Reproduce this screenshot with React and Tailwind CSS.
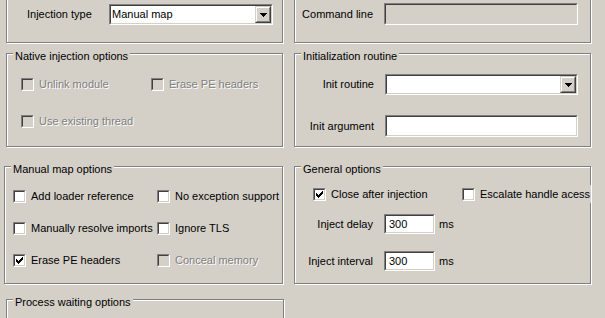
import React from "react";

function Group({ title, className = "", children }) {
  return (
    <div
      className={`relative shrink-0 border border-[#808080] shadow-[inset_1px_1px_0_#fff,1px_1px_0_#fff] ${className}`}
    >
      {title && (
        <span className="absolute left-[6px] top-[-4px] bg-[#d4d0c8] px-[2px] leading-[13px] whitespace-nowrap">
          {title}
        </span>
      )}
      {children}
    </div>
  );
}

function Check({ checked, disabled }) {
  return (
    <div className="w-[13px] h-[13px] shrink-0 border border-t-[#808080] border-l-[#808080] border-r-white border-b-white">
      <div
        className={`w-full h-full p-[1px] border border-t-[#404040] border-l-[#404040] border-r-[#d4d0c8] border-b-[#d4d0c8] ${
          disabled ? "bg-[#d4d0c8]" : "bg-white"
        }`}
      >
        {checked && (
          <svg width="7" height="7" viewBox="0 0 7 7" className="block" shapeRendering="crispEdges">
            <path
              d="M0 2h1v3H0z M1 3h1v3H1z M2 4h1v3H2z M3 3h1v3H3z M4 2h1v3H4z M5 1h1v3H5z M6 0h1v3H6z"
              fill={disabled ? "#808080" : "#000"}
            />
          </svg>
        )}
      </div>
    </div>
  );
}

function CheckItem({ label, checked, disabled, className = "" }) {
  return (
    <div className={`flex items-center ${className}`}>
      <Check checked={checked} disabled={disabled} />
      <span
        className={`ml-[5px] leading-[13px] whitespace-nowrap ${
          disabled ? "text-[#808080] [text-shadow:1px_1px_0_#fff]" : "text-black"
        }`}
      >
        {label}
      </span>
    </div>
  );
}

function Sunken({ className = "", inner = "bg-white", children }) {
  return (
    <div
      className={`shrink-0 border border-t-[#808080] border-l-[#808080] border-r-white border-b-white ${className}`}
    >
      <div
        className={`w-full h-full border border-t-[#404040] border-l-[#404040] border-r-[#d4d0c8] border-b-[#d4d0c8] ${inner}`}
      >
        {children}
      </div>
    </div>
  );
}

function DropButton() {
  return (
    <div className="w-[16px] h-full shrink-0 border border-t-[#d4d0c8] border-l-[#d4d0c8] border-r-[#404040] border-b-[#404040]">
      <div className="w-full h-full flex items-center justify-center bg-[#d4d0c8] border border-t-white border-l-white border-r-[#808080] border-b-[#808080]">
        <svg width="7" height="4" viewBox="0 0 7 4" className="block" shapeRendering="crispEdges">
          <path d="M0 0h7v1H0z M1 1h5v1H1z M2 2h3v1H2z M3 3h1v1H3z" fill="#000" />
        </svg>
      </div>
    </div>
  );
}

function Combo({ className = "", value = "" }) {
  return (
    <Sunken className={className}>
      <div className="flex h-full">
        <span className="flex-1 flex items-center pl-[1px] whitespace-nowrap">{value}</span>
        <DropButton />
      </div>
    </Sunken>
  );
}

function Edit({ className = "", value = "", disabled }) {
  return (
    <Sunken className={className} inner={disabled ? "bg-[#d4d0c8]" : "bg-white"}>
      <div className="h-full flex items-center pl-[3px]">{value}</div>
    </Sunken>
  );
}

export default function App() {
  return (
    <div className="w-[605px] h-[318px] overflow-hidden bg-[#d4d0c8] font-['Liberation_Sans',Arial,sans-serif] text-[11px] leading-[13px] text-black flex pl-[6px]">
      {/* Left column */}
      <div className="w-[277px] shrink-0 flex flex-col">
        <Group className="-mt-[8px] h-[51px]">
          <div className="flex items-center pt-[11px]">
            <span className="w-[102px] pl-[20px] shrink-0 whitespace-nowrap">Injection type</span>
            <Combo className="w-[164px] h-[21px]" value="Manual map" />
          </div>
        </Group>

        <Group title="Native injection options" className="mt-[10px] h-[94px]">
          <div className="pt-[24px] pl-[14px] flex flex-col gap-[24px]">
            <div className="flex">
              <CheckItem className="w-[130px]" label="Unlink module" disabled />
              <CheckItem label="Erase PE headers" disabled />
            </div>
            <div className="flex">
              <CheckItem label="Use existing thread" disabled />
            </div>
          </div>
        </Group>

        <Group title="Manual map options" className="mt-[19px] h-[118px] -ml-[2px] w-[279px]">
          <div className="pt-[23px] pl-[8px] flex flex-col gap-[19px]">
            <div className="flex">
              <CheckItem className="w-[144px]" label="Add loader reference" />
              <CheckItem label="No exception support" />
            </div>
            <div className="flex">
              <CheckItem className="w-[144px]" label="Manually resolve imports" />
              <CheckItem label="Ignore TLS" />
            </div>
            <div className="flex">
              <CheckItem className="w-[144px]" label="Erase PE headers" checked />
              <CheckItem label="Conceal memory" disabled />
            </div>
          </div>
        </Group>

        <Group title="Process waiting options" className="mt-[15px] h-[40px] w-[278px]" />
      </div>

      {/* Right column */}
      <div className="ml-[11px] w-[297px] shrink-0 flex flex-col">
        <Group className="-mt-[8px] h-[51px]">
          <div className="flex items-center pt-[10px]">
            <span className="w-[78px] shrink-0 text-right whitespace-nowrap">Command line</span>
            <Edit className="ml-[11px] w-[194px] h-[22px]" disabled />
          </div>
        </Group>

        <Group title="Initialization routine" className="mt-[10px] h-[94px]">
          <div className="pt-[20px] flex flex-col gap-[20px]">
            <div className="flex items-center">
              <span className="w-[79px] shrink-0 text-right whitespace-nowrap">Init routine</span>
              <Combo className="ml-[11px] w-[193px] h-[21px]" />
            </div>
            <div className="flex items-center">
              <span className="w-[79px] shrink-0 text-right whitespace-nowrap">Init argument</span>
              <Edit className="ml-[11px] w-[193px] h-[22px]" />
            </div>
          </div>
        </Group>

        <Group title="General options" className="mt-[19px] h-[118px]">
          <div className="pt-[18px] flex flex-col">
            <div className="flex pl-[18px]">
              <div className="w-[149px] h-[18px] flex items-center shrink-0">
                <CheckItem label="Close after injection" checked />
              </div>
              <div className="flex-1 -mr-[1px] h-[18px] flex items-center bg-[#d4d0c8] relative overflow-hidden">
                <CheckItem label="Escalate handle acess" />
              </div>
            </div>
            <div className="flex items-center mt-[11px]">
              <span className="w-[78px] shrink-0 text-right whitespace-nowrap">Inject delay</span>
              <Edit className="ml-[11px] w-[51px] h-[20px]" value="300" />
              <span className="ml-[4px]">ms</span>
            </div>
            <div className="flex items-center mt-[17px]">
              <span className="w-[78px] shrink-0 text-right whitespace-nowrap">Inject interval</span>
              <Edit className="ml-[11px] w-[51px] h-[20px]" value="300" />
              <span className="ml-[4px]">ms</span>
            </div>
          </div>
        </Group>
      </div>
    </div>
  );
}
